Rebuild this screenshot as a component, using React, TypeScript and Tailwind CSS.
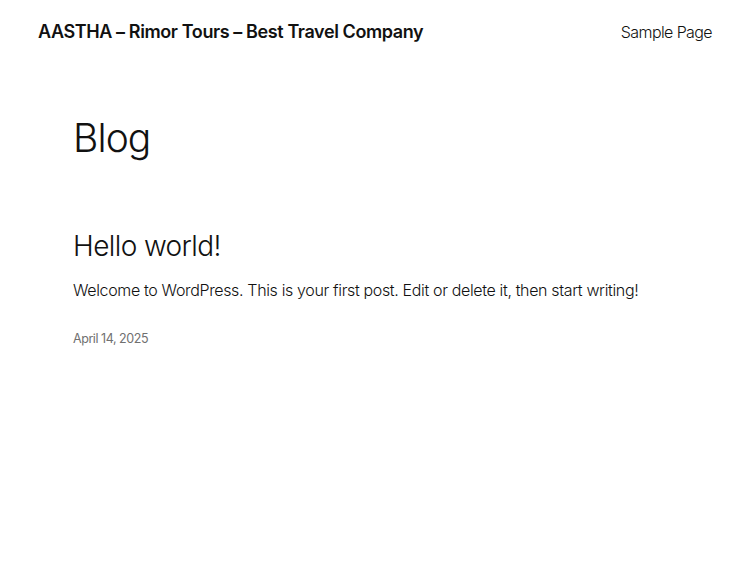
export default function App() {
  return (
    <div className="min-h-[563px] bg-white text-[#111111] font-['Inter','Noto_Sans',sans-serif]">
      <header className="flex items-center justify-between px-[38px] pt-[18px]">
        <a className="text-[18px] font-semibold tracking-[-0.4px] leading-[28px]">
          AASTHA – Rimor Tours – Best Travel Company
        </a>
        <nav className="text-[16px] font-light leading-[28px] tracking-[-0.6px]">Sample Page</nav>
      </header>

      <main className="px-[73px]">
        <h1 className="mt-[65px] text-[39px] font-light leading-[54px] tracking-[-0.9px]">Blog</h1>

        <article className="mt-[61px]">
          <h2 className="text-[28px] font-light leading-[40px] tracking-[-0.6px]">Hello world!</h2>
          <p className="mt-[11px] text-[16px] font-light leading-[26px] tracking-[-0.35px]">
            Welcome to WordPress. This is your first post. Edit or delete it, then start writing!
          </p>
          <div className="mt-[27px] text-[12.5px] leading-[18px] text-[#707070] tracking-[-0.45px]">April 14, 2025</div>
        </article>
      </main>
    </div>
  )
}
